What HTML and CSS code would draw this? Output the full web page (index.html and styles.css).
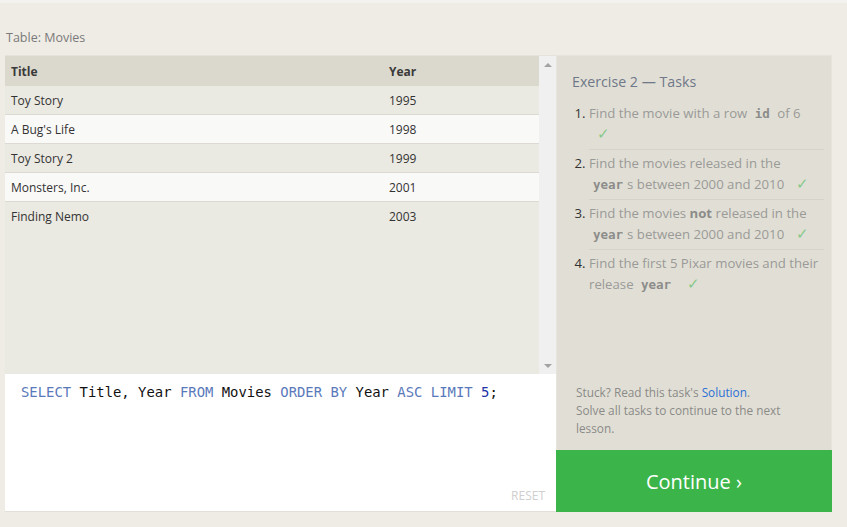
FILE: index.html
```html
<!DOCTYPE html>
<html>
<head>
<meta charset="utf-8">
<link rel="stylesheet" href="styles.css">
</head>
<body>
<div class="topstrip"></div>
<div class="page">
  <div class="caption">Table: Movies</div>
  <div class="workspace">
    <div class="left">
      <div class="results">
        <div class="tablewrap">
          <table class="grid">
            <thead><tr><th class="c-title">Title</th><th>Year</th></tr></thead>
            <tbody>
              <tr><td>Toy Story</td><td>1995</td></tr>
              <tr><td>A Bug's Life</td><td>1998</td></tr>
              <tr><td>Toy Story 2</td><td>1999</td></tr>
              <tr><td>Monsters, Inc.</td><td>2001</td></tr>
              <tr><td>Finding Nemo</td><td>2003</td></tr>
            </tbody>
          </table>
        </div>
        <div class="scrollbar">
          <span class="arrow up"></span>
          <span class="arrow down"></span>
        </div>
      </div>
      <div class="editor">
        <pre class="code"><span class="kw">SELECT</span> Title, Year <span class="kw">FROM</span> Movies <span class="kw">ORDER BY</span> Year <span class="kw">ASC</span> <span class="kw">LIMIT</span> <span class="num">5</span>;</pre>
        <div class="reset">RESET</div>
      </div>
    </div>
    <div class="right">
      <div class="tasks">
        <h2 class="tasks-title">Exercise 2 — Tasks</h2>
        <ol class="tasklist">
          <li>Find the movie with a row <code>id</code> of 6 <span class="check">✓</span></li>
          <li>Find the movies released in the <code>year</code>s between 2000 and 2010 <span class="check">✓</span></li>
          <li>Find the movies <b>not</b> released in the <code>year</code>s between 2000 and 2010 <span class="check">✓</span></li>
          <li>Find the first 5 Pixar movies and their release <code>year</code> <span class="check">✓</span></li>
        </ol>
        <div class="spacer"></div>
        <p class="stuck">Stuck? Read this task's <a class="link">Solution</a>.<br>Solve all tasks to continue to the next lesson.</p>
      </div>
      <div class="continue">Continue ›</div>
    </div>
  </div>
</div>
</body>
</html>
```
FILE: styles.css
```css
html, body {
  margin: 0;
  padding: 0;
}
body {
  background: #efece5;
  font-family: "Open Sans", "Noto Sans", sans-serif;
  width: 847px;
  height: 527px;
  overflow: hidden;
}
.topstrip {
  height: 3px;
  background: #f4f2ee;
}
.page {
  padding: 0 0 0 5px;
}
.caption {
  font-size: 12.5px;
  color: #7a7a7a;
  padding: 26px 0 0 1px;
  height: 26px;
  line-height: 17px;
}
.workspace {
  display: grid;
  grid-template-columns: 551px 276px;
}
.left {
  display: flex;
  flex-direction: column;
}
.results {
  display: flex;
  height: 319px;
  background: #eae9e2;
  border-top: 1px solid #e4e2da;
  box-sizing: border-box;
}
.tablewrap {
  flex: 1;
}
.grid {
  width: 100%;
  border-collapse: collapse;
  font-size: 12px;
  color: #333;
}
.grid th {
  background: #dbd9cd;
  text-align: left;
  font-weight: 700;
  height: 30px;
  padding: 0 6px;
  color: #3a3a3a;
}
.grid .c-title {
  width: 366px;
}
.grid td {
  height: 28px;
  padding: 0 6px;
  border-bottom: 1px solid #dcdad3;
}
.grid tbody tr:nth-child(odd) td {
  background: #eae9e2;
}
.grid tbody tr:nth-child(even) td {
  background: #f9f9f8;
}
.grid tbody tr:last-child td {
  border-bottom: none;
}
.scrollbar {
  width: 17px;
  background: #f0f0f0;
  display: flex;
  flex-direction: column;
  justify-content: space-between;
  align-items: center;
  padding: 7px 0 6px;
  box-sizing: border-box;
}
.arrow {
  width: 0;
  height: 0;
  border-left: 4px solid transparent;
  border-right: 4px solid transparent;
}
.arrow.up {
  border-bottom: 4px solid #a3a3a3;
}
.arrow.down {
  border-top: 4px solid #a3a3a3;
}
.editor {
  height: 138px;
  background: #fff;
  position: relative;
  border-bottom: 1px solid #e2e0d8;
  box-sizing: border-box;
}
.code {
  margin: 0;
  padding: 9px 0 0 16px;
  font-family: "DejaVu Sans Mono", "Liberation Mono", monospace;
  font-size: 13.9px;
  line-height: 18px;
  color: #111;
}
.kw {
  color: #5a79ba;
}
.num {
  color: #2232a8;
}
.reset {
  position: absolute;
  right: 11px;
  bottom: 7px;
  font-size: 12px;
  color: #cfcfcf;
}
.right {
  display: flex;
  flex-direction: column;
}
.tasks {
  height: 395px;
  background: #e1dfd5;
  border: 1px solid #e6e4dc;
  border-bottom: none;
  box-sizing: border-box;
  display: flex;
  flex-direction: column;
  padding: 16px 7px 0 15px;
}
.tasks-title {
  margin: 0;
  font-weight: 400;
  font-size: 14.2px;
  color: #6f7789;
  line-height: 20px;
}
.tasklist {
  margin: 11px 0 0;
  padding: 0 0 0 17px;
  font-size: 13.2px;
  line-height: 21px;
  color: #9a9a98;
}
.tasklist li {
  padding: 0 0 4px;
  margin: 0 0 3px;
  border-bottom: 1px solid #d6d4ca;
}
.tasklist li:last-child {
  border-bottom: none;
}
.tasklist li::marker {
  color: #333;
}
.tasklist code {
  font-family: "DejaVu Sans Mono", "Liberation Mono", monospace;
  font-weight: 700;
  font-size: 12.5px;
  line-height: 1;
  color: #8c8c8a;
  padding: 0 4px;
}
.tasklist b {
  color: #8c8c8a;
}
.check {
  color: #86c98a;
  font-size: 14.5px;
  line-height: 1;
  padding: 0 7px 0 8px;
}
.spacer {
  flex: 1;
}
.stuck {
  margin: 0 0 13px;
  padding-left: 4px;
  max-width: 220px;
  font-size: 11.8px;
  line-height: 18px;
  color: #8a8a88;
}
.link {
  color: #2b6fd6;
}
.continue {
  height: 62px;
  background: #3bb54a;
  color: #fff;
  font-size: 20px;
  display: flex;
  align-items: center;
  justify-content: center;
}
```
